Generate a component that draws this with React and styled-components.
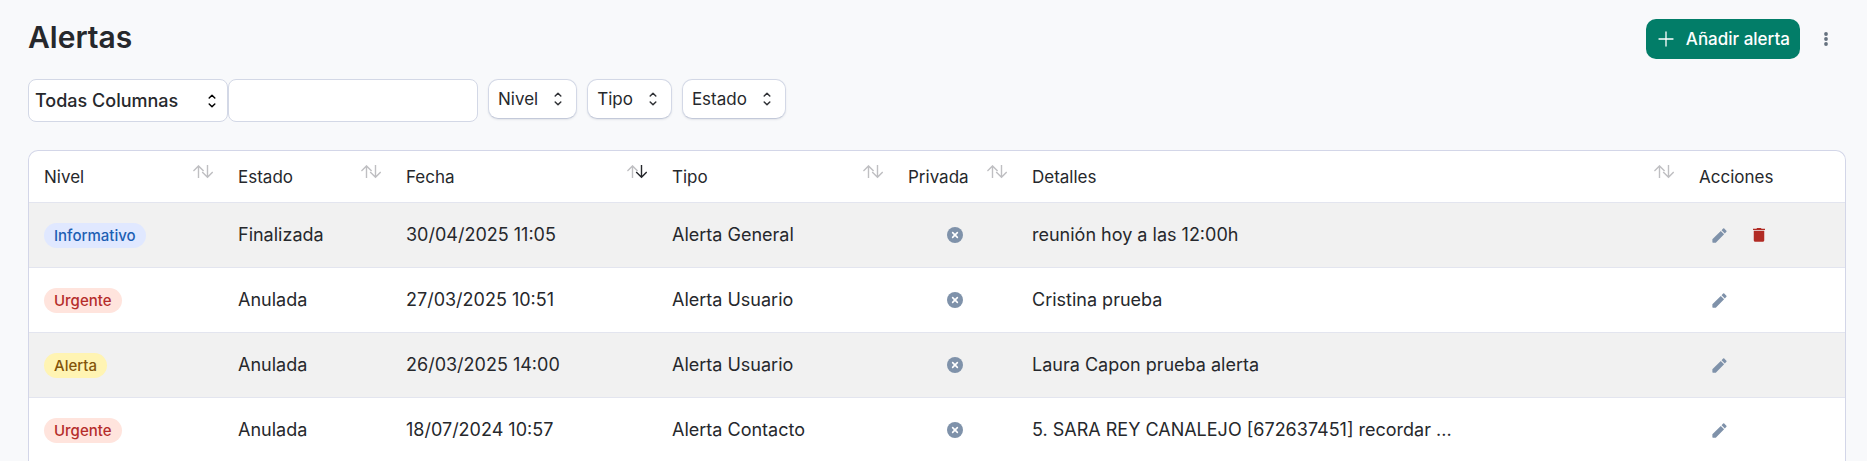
import React, { useState } from "react";
import styled, { createGlobalStyle, css } from "styled-components";

const GlobalStyle = createGlobalStyle`
  *, *::before, *::after { box-sizing: border-box; }
  body {
    margin: 0;
    background: #f8f9fb;
    color: #26282c;
    font-family: Inter, "Liberation Sans", sans-serif;
    font-size: 17px;
    line-height: 24px;
  }
  button, input, select { font: inherit; color: inherit; }
`;

const Page = styled.main`
  padding: 19px 21px 0 28px;
`;

const PageHeader = styled.header`
  display: flex;
  align-items: flex-start;
  justify-content: space-between;
  height: 40px;
  padding-right: 4px;
`;

const Title = styled.h1`
  margin: 0;
  font-size: 30px;
  line-height: 36px;
  font-weight: 600;
`;

const HeaderActions = styled.div`
  display: flex;
  align-items: center;
  gap: 10px;
`;

const PrimaryButton = styled.button`
  display: flex;
  align-items: center;
  gap: 12px;
  height: 40px;
  padding: 0 10px 0 12px;
  border: 0;
  border-radius: 10px;
  background: #027d68;
  color: #fff;
  font-weight: 500;
  cursor: pointer;
`;

const IconButton = styled.button`
  display: flex;
  align-items: center;
  justify-content: center;
  width: ${(p) => p.$size}px;
  height: ${(p) => p.$size}px;
  padding: 0;
  border: 0;
  background: none;
  color: ${(p) => p.$color};
  cursor: pointer;
`;

const Filters = styled.form`
  display: flex;
  align-items: flex-start;
  gap: 10px;
  margin-top: 20px;
`;

const SearchGroup = styled.div`
  display: flex;
`;

const fieldBox = css`
  height: 43px;
  border: 1px solid #d3d8e6;
  border-radius: 8px;
  background: #fff;
`;

const SelectWrap = styled.div`
  display: grid;
  align-items: center;
  width: 200px;
  > * { grid-area: 1 / 1; }
  > svg {
    justify-self: end;
    margin-right: 12px;
    pointer-events: none;
  }
`;

const Select = styled.select`
  ${fieldBox}
  appearance: none;
  width: 100%;
  padding: 0 32px 0 6px;
  font-size: 18px;
  font-weight: 500;
`;

const SearchInput = styled.input`
  ${fieldBox}
  width: 250px;
  padding: 0 10px;
`;

const FilterButton = styled.button`
  display: flex;
  align-items: center;
  gap: 16px;
  height: 40px;
  padding: 0 14px 0 9px;
  border: 1px solid #d3d8e6;
  border-bottom-color: #c3c9d9;
  border-radius: 10px;
  background: #fff;
  box-shadow: 0 1px 2px rgba(40, 50, 80, 0.1);
  cursor: pointer;
`;

const TableCard = styled.section`
  margin-top: 28px;
  border: 1px solid #d3d6e8;
  border-radius: 10px 10px 0 0;
  border-bottom: 0;
  background: #fff;
  overflow: hidden;
`;

const Table = styled.table`
  width: 100%;
  table-layout: fixed;
  border-collapse: separate;
  border-spacing: 0;
`;

const HeadCell = styled.th`
  width: ${(p) => (p.$width ? `${p.$width}px` : "auto")};
  height: 52px;
  padding: 0 10px 0 15px;
  border-bottom: 1px solid #e3e5ef;
  font-weight: 400;
  text-align: left;
`;

const HeadContent = styled.div`
  display: flex;
  align-items: flex-start;
  justify-content: space-between;
`;

const SortButton = styled.button`
  display: flex;
  padding: 0;
  border: 0;
  background: none;
  cursor: pointer;
`;

const Row = styled.tr`
  background: #fff;
  &:nth-child(odd) { background: #f1f1f1; }
`;

const Cell = styled.td`
  height: 65px;
  padding: 0 15px;
  border-bottom: 1px solid #e3e5ef;
  font-size: 18px;
  white-space: nowrap;
  overflow: hidden;
  text-overflow: ellipsis;
  text-align: ${(p) => (p.$center ? "center" : "left")};
  > svg { display: block; margin: 0 auto; }
`;

const levels = {
  Informativo: { bg: "#e0e8ff", fg: "#1d5fb4" },
  Urgente: { bg: "#ffe4dd", fg: "#b52d2b" },
  Alerta: { bg: "#fff4b3", fg: "#83550b" },
};

const Badge = styled.span`
  display: block;
  width: fit-content;
  height: 25px;
  padding: 0 10px;
  border-radius: 13px;
  background: ${(p) => levels[p.$level].bg};
  color: ${(p) => levels[p.$level].fg};
  font-size: 15px;
  line-height: 25px;
  font-weight: 500;
`;

const Actions = styled.div`
  display: flex;
  gap: 20px;
  padding-left: 10px;
`;

const UpDown = ({ color = "#303236" }) => (
  <svg width="8" height="14" viewBox="0 0 8 14" fill="none" stroke={color} strokeWidth="1.5" strokeLinecap="round" strokeLinejoin="round" aria-hidden="true">
    <path d="M1.2 4 4 1.3 6.8 4M1.2 10 4 12.7 6.8 10" />
  </svg>
);

const PlusIcon = () => (
  <svg width="16" height="16" viewBox="0 0 16 16" stroke="currentColor" strokeWidth="1.3" strokeLinecap="round" aria-hidden="true">
    <path d="M8 1v14M1 8h14" />
  </svg>
);

const DotsIcon = () => (
  <svg width="4" height="14" viewBox="0 0 4 14" fill="currentColor" aria-hidden="true">
    <circle cx="2" cy="2" r="1.9" />
    <circle cx="2" cy="7" r="1.9" />
    <circle cx="2" cy="12" r="1.9" />
  </svg>
);

const SortIcon = ({ dir }) => (
  <svg width="20" height="14" viewBox="0 0 20 14" fill="none" strokeWidth="1.4" aria-hidden="true">
    <path d="M5.500 13V.9M.4 6 5.500.9 10.600 6" stroke={dir === "asc" ? "#26282c" : "#bfbfc2"} />
    <path d="M14.500 0v12.200M9.200 7l5.300 5.200L19.700 7" stroke={dir === "desc" ? "#26282c" : "#bfbfc2"} />
  </svg>
);

const CrossCircle = () => (
  <svg width="16" height="16" viewBox="0 0 17 17" role="img" aria-label="No">
    <circle cx="8.500" cy="8.500" r="8.500" fill="#7f92aa" />
    <path d="m6 6 5 5m0-5-5 5" stroke="#fff" strokeWidth="1.7" strokeLinecap="round" />
  </svg>
);

const PencilIcon = () => (
  <svg width="19" height="19" viewBox="0 0 24 24" fill="currentColor" aria-hidden="true">
    <path d="M3 16.700V20.200a.8.8 0 0 0 .8.8h3.500L17.810 10.400l-4.200-4.200L3 16.700zM20.710 7.400a1 1 0 0 0 0-1.410l-2.700-2.700a1 1 0 0 0-1.410 0l-2 2 4.100 4.100 2-2z" />
  </svg>
);

const TrashIcon = () => (
  <svg width="18" height="18" viewBox="0 0 24 24" fill="currentColor" aria-hidden="true">
    <path d="M5 19c0 1.100.9 2 2 2h10c1.100 0 2-.9 2-2V6.200H5v12.800zM20 3.600h-4.500l-1-1h-5l-1 1H4v1.800h16V3.600z" />
  </svg>
);

const columns = [
  { label: "Nivel", width: 194 },
  { label: "Estado", width: 168 },
  { label: "Fecha", width: 266 },
  { label: "Tipo", width: 236 },
  { label: "Privada", width: 124 },
  { label: "Detalles" },
];

const alerts = [
  { level: "Informativo", state: "Finalizada", date: "30/04/2025 11:05", type: "Alerta General", details: "reunión hoy a las 12:00h", removable: true },
  { level: "Urgente", state: "Anulada", date: "27/03/2025 10:51", type: "Alerta Usuario", details: "Cristina prueba" },
  { level: "Alerta", state: "Anulada", date: "26/03/2025 14:00", type: "Alerta Usuario", details: "Laura Capon prueba alerta" },
  { level: "Urgente", state: "Anulada", date: "18/07/2024 10:57", type: "Alerta Contacto", details: "5. SARA REY CANALEJO [672637451] recordar ..." },
];

export default function App() {
  const [query, setQuery] = useState("");
  return (
    <Page>
      <GlobalStyle />
      <PageHeader>
        <Title>Alertas</Title>
        <HeaderActions>
          <PrimaryButton type="button"><PlusIcon />Añadir alerta</PrimaryButton>
          <IconButton type="button" $size={32} $color="#66727f" aria-label="Más opciones"><DotsIcon /></IconButton>
        </HeaderActions>
      </PageHeader>

      <Filters onSubmit={(e) => e.preventDefault()}>
        <SearchGroup>
          <SelectWrap>
            <Select aria-label="Columna de búsqueda" defaultValue="all">
              <option value="all">Todas Columnas</option>
              {columns.map((c) => <option key={c.label} value={c.label}>{c.label}</option>)}
            </Select>
            <UpDown color="#000" />
          </SelectWrap>
          <SearchInput type="text" aria-label="Buscar" value={query} onChange={(e) => setQuery(e.target.value)} />
        </SearchGroup>
        {["Nivel", "Tipo", "Estado"].map((f) => (
          <FilterButton type="button" key={f} aria-haspopup="listbox">{f}<UpDown /></FilterButton>
        ))}
      </Filters>

      <TableCard>
        <Table>
          <thead>
            <tr>
              {columns.map((c) => (
                <HeadCell key={c.label} scope="col" $width={c.width}>
                  <HeadContent>
                    {c.label}
                    <SortButton type="button" aria-label={`Ordenar por ${c.label}`}>
                      <SortIcon dir={c.label === "Fecha" ? "desc" : null} />
                    </SortButton>
                  </HeadContent>
                </HeadCell>
              ))}
              <HeadCell scope="col" $width={161}>Acciones</HeadCell>
            </tr>
          </thead>
          <tbody>
            {alerts.map((a) => (
              <Row key={a.date}>
                <Cell><Badge $level={a.level}>{a.level}</Badge></Cell>
                <Cell>{a.state}</Cell>
                <Cell>{a.date}</Cell>
                <Cell>{a.type}</Cell>
                <Cell $center><CrossCircle /></Cell>
                <Cell>{a.details}</Cell>
                <Cell>
                  <Actions>
                    <IconButton type="button" $size={20} $color="#7f92aa" aria-label="Editar"><PencilIcon /></IconButton>
                    {a.removable && <IconButton type="button" $size={20} $color="#b12b24" aria-label="Eliminar"><TrashIcon /></IconButton>}
                  </Actions>
                </Cell>
              </Row>
            ))}
          </tbody>
        </Table>
      </TableCard>
    </Page>
  );
}
